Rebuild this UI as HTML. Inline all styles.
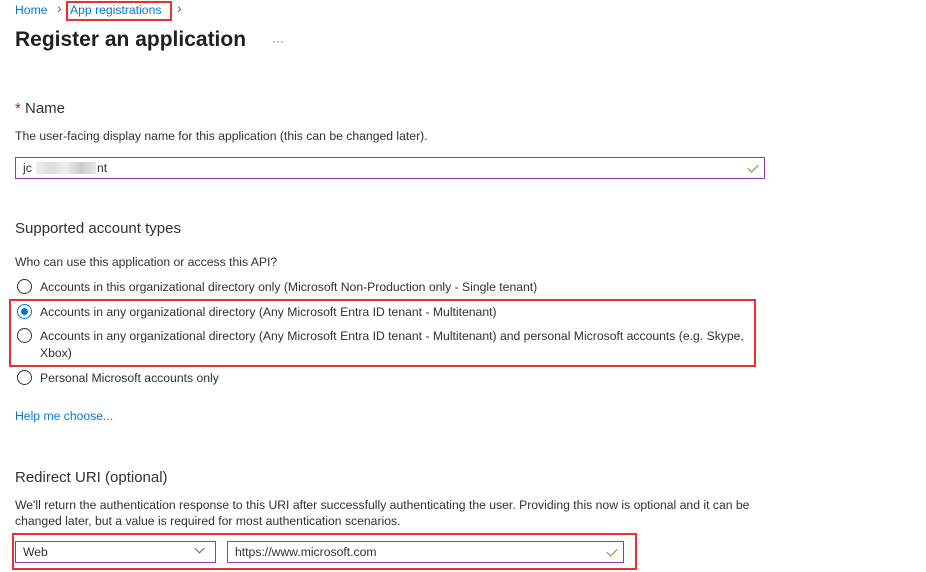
<!DOCTYPE html>
<html><head><style>
body{margin:0;width:926px;height:572px;background:#fff;font-family:"Liberation Sans",sans-serif;color:#323130;position:relative;overflow:hidden}
.a{position:absolute;white-space:nowrap}
.s{font-size:12.2px}
.h{font-size:15px}
.link{color:#0078d4}
.rb{position:absolute;border:2px solid #e8312f;box-sizing:border-box}
.radio{position:absolute;width:15px;height:15px;border:1px solid #323130;border-radius:50%;box-sizing:border-box}
.inp{position:absolute;border:1px solid #8a3bab;box-sizing:border-box;background:#fff}
.chk{position:absolute;width:9px;height:5px;border-left:1.3px solid #57a300;border-bottom:1.3px solid #57a300;transform:rotate(-45deg)}
</style></head><body>
<div class="a s link" style="left:15px;top:3px">Home</div>
<div class="a" style="left:57px;top:0px;color:#605e5c;font-size:14px">›</div>
<div class="a s link" style="left:70px;top:3px">App registrations</div>
<div class="a" style="left:177px;top:0px;color:#605e5c;font-size:14px">›</div>
<div class="rb" style="left:66px;top:1px;width:106px;height:20px"></div>
<div class="a" style="left:15px;top:28px;font-size:21px;font-weight:600;color:#201f1e">Register an application</div>
<div class="a" style="left:272px;top:34px;font-size:12px;color:#605e5c">···</div>

<div class="a h" style="left:15px;top:100px"><span style="color:#a4262c">*</span> Name</div>
<div class="a s" style="left:15px;top:129px">The user-facing display name for this application (this can be changed later).</div>
<div class="inp" style="left:15px;top:157px;width:750px;height:22px"></div>
<div class="a s" style="left:23px;top:161px">jc</div>
<div class="a" style="left:36px;top:162px;width:60px;height:12px;background:linear-gradient(90deg,#eee,#ddd,#eee,#ccc,#e6e6e6)"></div>
<div class="a s" style="left:97px;top:161px">nt</div>
<div class="chk" style="left:748px;top:164px"></div>

<div class="a h" style="left:15px;top:220px">Supported account types</div>
<div class="a s" style="left:15px;top:255px">Who can use this application or access this API?</div>
<div class="radio" style="left:17px;top:279px"></div>
<div class="a s" style="left:40px;top:280px">Accounts in this organizational directory only (Microsoft Non-Production only - Single tenant)</div>
<div class="radio" style="left:17px;top:304px;border-color:#0078d4"><div style="position:absolute;left:3px;top:3px;width:7px;height:7px;border-radius:50%;background:#0078d4"></div></div>
<div class="a s" style="left:40px;top:305px">Accounts in any organizational directory (Any Microsoft Entra ID tenant - Multitenant)</div>
<div class="radio" style="left:17px;top:328px"></div>
<div class="a s" style="left:40px;top:329px">Accounts in any organizational directory (Any Microsoft Entra ID tenant - Multitenant) and personal Microsoft accounts (e.g. Skype,</div>
<div class="a s" style="left:40px;top:346px">Xbox)</div>
<div class="radio" style="left:17px;top:370px"></div>
<div class="a s" style="left:40px;top:371px">Personal Microsoft accounts only</div>
<div class="rb" style="left:9px;top:299px;width:747px;height:68px"></div>

<div class="a s link" style="left:15px;top:409px">Help me choose...</div>

<div class="a h" style="left:15px;top:469px">Redirect URI (optional)</div>
<div class="a s" style="left:15px;top:498px">We'll return the authentication response to this URI after successfully authenticating the user. Providing this now is optional and it can be</div>
<div class="a s" style="left:15px;top:514px">changed later, but a value is required for most authentication scenarios.</div>
<div class="inp" style="left:15px;top:541px;width:201px;height:22px"></div>
<div class="a s" style="left:23px;top:545px">Web</div>
<div class="a" style="left:196px;top:545px;width:6px;height:6px;border-right:1px solid #605e5c;border-bottom:1px solid #605e5c;transform:rotate(45deg)"></div>
<div class="inp" style="left:227px;top:541px;width:397px;height:22px"></div>
<div class="a s" style="left:235px;top:545px">https://www.microsoft.com</div>
<div class="chk" style="left:607px;top:548px"></div>
<div class="rb" style="left:12px;top:533px;width:625px;height:37px"></div>
</body></html>
